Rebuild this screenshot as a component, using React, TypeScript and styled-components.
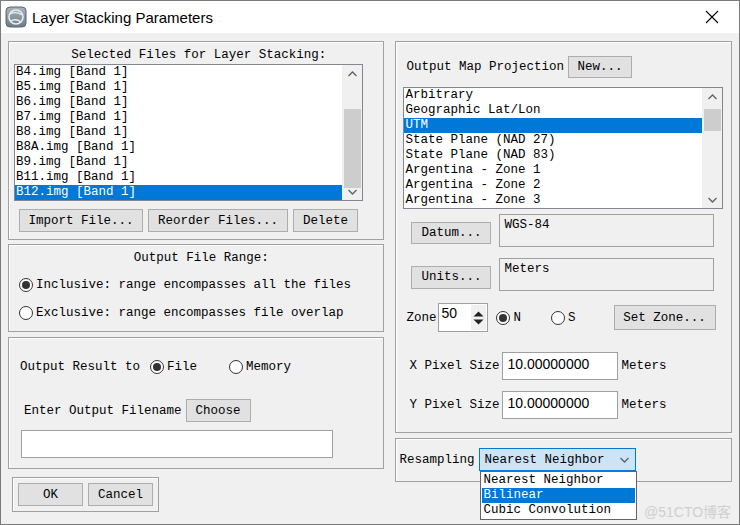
import styled, { createGlobalStyle } from "styled-components";

const Global = createGlobalStyle`
  html, body {
    margin: 0;
    padding: 0;
    background: #f0f0f0;
  }
`;

const MONO = `"Liberation Mono", "DejaVu Sans Mono", monospace`;

const Window = styled.div`
  position: relative;
  width: 740px;
  height: 525px;
  box-sizing: border-box;
  border: 1px solid #7a7a7a;
  background: #f0f0f0;
  font-family: ${MONO};
  font-size: 12.5px;
  color: #000;
  overflow: hidden;
`;

const TitleBar = styled.div`
  height: 32px;
  background: #fff;
  display: flex;
  align-items: center;
  padding-left: 4px;
  font-family: "Liberation Sans", Arial, sans-serif;
  font-size: 15px;
  color: #000;
`;

const TitleText = styled.span`
  margin-left: 5px;
  flex: 1;
`;

const CloseBox = styled.div`
  width: 46px;
  height: 32px;
  display: flex;
  align-items: center;
  justify-content: center;
  margin-right: 4px;
`;

const Body = styled.div`
  display: flex;
  gap: 11px;
  padding: 8px 7px 0 7px;
`;

const Column = styled.div<{ $w: number }>`
  width: ${(p) => p.$w}px;
  display: flex;
  flex-direction: column;
`;

const Frame = styled.div<{ $h: number; $mt?: number; $pad?: string }>`
  box-sizing: border-box;
  height: ${(p) => p.$h}px;
  margin-top: ${(p) => p.$mt ?? 0}px;
  border: 1px solid #a0a0a0;
  box-shadow: inset 1px 1px 0 #fff;
  padding: ${(p) => p.$pad ?? "0"};
  display: flex;
  flex-direction: column;
  position: relative;
`;

const ButtonFrame = styled(Frame)`
  width: 147px;
  margin-left: 4px;
  flex-direction: row;
  gap: 5px;
`;

const Legend = styled.div`
  height: 15px;
  line-height: 15px;
  text-align: center;
`;

const ListBox = styled.div<{ $w: number; $h: number; $mt?: number }>`
  box-sizing: border-box;
  width: ${(p) => p.$w}px;
  height: ${(p) => p.$h}px;
  margin-top: ${(p) => p.$mt ?? 0}px;
  border: 1px solid #828790;
  background: #fff;
  display: flex;
`;

const ListItems = styled.div`
  flex: 1;
  overflow: hidden;
`;

const ListItem = styled.div<{ $sel?: boolean }>`
  height: 15px;
  line-height: 15px;
  padding-left: 1px;
  white-space: pre;
  background: ${(p) => (p.$sel ? "#0078d7" : "transparent")};
  color: ${(p) => (p.$sel ? "#fff" : "#000")};
`;

const ScrollBar = styled.div`
  width: 20px;
  background: #f0f0f0;
  display: flex;
  flex-direction: column;
  align-items: center;
`;

const ScrollArrow = styled.div`
  height: 17px;
  display: flex;
  align-items: center;
  justify-content: center;
`;

const Track = styled.div`
  flex: 1;
  width: 100%;
  position: relative;
`;

const Thumb = styled.div<{ $top: number; $h: number }>`
  position: absolute;
  left: 2px;
  right: 1px;
  top: ${(p) => p.$top}px;
  height: ${(p) => p.$h}px;
  background: #cdcdcd;
`;

const Row = styled.div<{ $mt?: number; $ml?: number; $gap?: number; $h?: number }>`
  display: flex;
  align-items: center;
  margin-top: ${(p) => p.$mt ?? 0}px;
  margin-left: ${(p) => p.$ml ?? 0}px;
  gap: ${(p) => p.$gap ?? 0}px;
  height: ${(p) => (p.$h ? `${p.$h}px` : "auto")};
`;

const Button = styled.div<{ $w: number; $h?: number; $ml?: number; $mt?: number }>`
  box-sizing: border-box;
  width: ${(p) => p.$w}px;
  height: ${(p) => p.$h ?? 23}px;
  margin-left: ${(p) => p.$ml ?? 0}px;
  margin-top: ${(p) => p.$mt ?? 0}px;
  background: #e1e1e1;
  border: 1px solid #adadad;
  display: flex;
  align-items: center;
  justify-content: center;
  white-space: pre;
`;

const RadioCircle = styled.span<{ $on?: boolean }>`
  box-sizing: border-box;
  width: 14px;
  height: 14px;
  border-radius: 50%;
  border: 1px solid #333;
  background: #fff;
  display: inline-flex;
  align-items: center;
  justify-content: center;
  flex-shrink: 0;
  &::after {
    content: "";
    width: 8px;
    height: 8px;
    border-radius: 50%;
    background: ${(p) => (p.$on ? "#333" : "transparent")};
  }
`;

const RadioLabel = styled.label<{ $ml?: number }>`
  display: flex;
  align-items: center;
  gap: 3px;
  margin-left: ${(p) => p.$ml ?? 0}px;
  white-space: pre;
`;

const Text = styled.span<{ $ml?: number }>`
  margin-left: ${(p) => p.$ml ?? 0}px;
  white-space: pre;
`;

const TextField = styled.div<{ $w: number; $h: number; $ml?: number; $sans?: boolean; $top?: boolean }>`
  box-sizing: border-box;
  width: ${(p) => p.$w}px;
  height: ${(p) => p.$h}px;
  margin-left: ${(p) => p.$ml ?? 0}px;
  background: ${(p) => (p.$top ? "#f0f0f0" : "#fff")};
  border: 1px solid #a0a0a0;
  padding: ${(p) => (p.$top ? "3px 0 0 4px" : "4px 0 0 4px")};
  font-family: ${(p) => (p.$sans ? `"Liberation Sans", Arial, sans-serif` : MONO)};
  font-size: ${(p) => (p.$sans ? "14px" : "12.5px")};
  line-height: 15px;
  display: flex;
  align-items: flex-start;
`;

const SpinBox = styled.div`
  box-sizing: border-box;
  width: 50px;
  height: 29px;
  margin-left: 2px;
  background: #fff;
  border: 1px solid #a0a0a0;
  display: flex;
  font-family: "Liberation Sans", Arial, sans-serif;
  font-size: 14px;
  padding-left: 2px;
`;

const SpinValue = styled.span`
  flex: 1;
  line-height: 18px;
`;

const SpinButtons = styled.div`
  width: 15px;
  display: flex;
  align-items: center;
  justify-content: center;
  background: #f0f0f0;
  margin: 1px;
`;

const Select = styled.div`
  box-sizing: border-box;
  width: 157px;
  height: 23px;
  margin-left: 5px;
  background: #cce4f7;
  border: 1px solid #0078d7;
  display: flex;
  align-items: center;
  padding: 0 6px 0 4px;
  justify-content: space-between;
`;

const DropList = styled.div`
  position: absolute;
  left: 84px;
  top: 32px;
  width: 157px;
  box-sizing: border-box;
  background: #fff;
  border: 1px solid #646464;
  padding: 1px;
  z-index: 2;
`;

const Watermark = styled.div`
  position: absolute;
  left: 643px;
  top: 500px;
  font-family: "Liberation Sans", "Noto Sans CJK SC", sans-serif;
  font-size: 14px;
  color: #cfcfcf;
`;

const Chevron = ({ up }: { up?: boolean }) => (
  <svg width="9" height="6" viewBox="0 0 9 6">
    <path
      d={up ? "M0.5 5 L4.5 1 L8.5 5" : "M0.5 1 L4.5 5 L8.5 1"}
      fill="none"
      stroke="#606060"
      strokeWidth="1.3"
    />
  </svg>
);

const AppIcon = () => (
  <svg width="22" height="22" viewBox="0 0 22 22">
    <defs>
      <linearGradient id="ig" x1="0" y1="0" x2="0" y2="1">
        <stop offset="0" stopColor="#a8b4bc" />
        <stop offset="1" stopColor="#6e7c86" />
      </linearGradient>
    </defs>
    <rect x="1" y="1" width="20" height="20" rx="4" fill="url(#ig)" stroke="#5b6770" />
    <circle cx="11" cy="11" r="7" fill="none" stroke="#e8eef2" strokeWidth="1.6" />
    <path d="M5 8 Q11 5 17 9" fill="none" stroke="#e8eef2" strokeWidth="1.3" />
    <path d="M6 15 Q11 12 16 16" fill="none" stroke="#e8eef2" strokeWidth="1.3" />
  </svg>
);

const CloseIcon = () => (
  <svg width="14" height="14" viewBox="0 0 14 14">
    <path d="M1 1 L13 13 M13 1 L1 13" stroke="#000" strokeWidth="1.1" />
  </svg>
);

const SpinIcon = () => (
  <svg width="11" height="16" viewBox="0 0 11 16">
    <path d="M0.5 6.5 L5.5 1.5 L10.5 6.5 Z" fill="#222" />
    <path d="M0.5 9.5 L5.5 14.5 L10.5 9.5 Z" fill="#222" />
  </svg>
);

const Scroll = ({ thumbTop, thumbH }: { thumbTop: number; thumbH: number }) => (
  <ScrollBar>
    <ScrollArrow>
      <Chevron up />
    </ScrollArrow>
    <Track>
      <Thumb $top={thumbTop} $h={thumbH} />
    </Track>
    <ScrollArrow>
      <Chevron />
    </ScrollArrow>
  </ScrollBar>
);

const files = [
  "B4.img [Band 1]",
  "B5.img [Band 1]",
  "B6.img [Band 1]",
  "B7.img [Band 1]",
  "B8.img [Band 1]",
  "B8A.img [Band 1]",
  "B9.img [Band 1]",
  "B11.img [Band 1]",
  "B12.img [Band 1]",
];

const projections = [
  "Arbitrary",
  "Geographic Lat/Lon",
  "UTM",
  "State Plane (NAD 27)",
  "State Plane (NAD 83)",
  "Argentina - Zone 1",
  "Argentina - Zone 2",
  "Argentina - Zone 3",
];

const resampling = ["Nearest Neighbor", "Bilinear", "Cubic Convolution"];

export default function App() {
  return (
    <>
      <Global />
      <Window>
        <TitleBar>
          <AppIcon />
          <TitleText>Layer Stacking Parameters</TitleText>
          <CloseBox>
            <CloseIcon />
          </CloseBox>
        </TitleBar>
        <Body>
          <Column $w={377}>
            <Frame $h={199} $pad="6px 0 0 5px">
              <Legend>Selected Files for Layer Stacking:</Legend>
              <ListBox $w={349} $h={137} $mt={1}>
                <ListItems>
                  {files.map((f, i) => (
                    <ListItem key={f} $sel={i === files.length - 1}>
                      {f}
                    </ListItem>
                  ))}
                </ListItems>
                <Scroll thumbTop={27} thumbH={79} />
              </ListBox>
              <Row $mt={8} $ml={5} $gap={5}>
                <Button $w={124}>Import File...</Button>
                <Button $w={140}>Reorder Files...</Button>
                <Button $w={65}>Delete</Button>
              </Row>
            </Frame>

            <Frame $h={88} $mt={4} $pad="6px 0 0 10px">
              <Legend>Output File Range:</Legend>
              <Row $h={28} $mt={5}>
                <RadioLabel>
                  <RadioCircle $on />
                  Inclusive: range encompasses all the files
                </RadioLabel>
              </Row>
              <Row $h={28}>
                <RadioLabel>
                  <RadioCircle />
                  Exclusive: range encompasses file overlap
                </RadioLabel>
              </Row>
            </Frame>

            <Frame $h={132} $mt={5} $pad="20px 0 0 11px">
              <Row $h={18}>
                <Text>Output Result to</Text>
                <RadioLabel $ml={10}>
                  <RadioCircle $on />
                  File
                </RadioLabel>
                <RadioLabel $ml={32}>
                  <RadioCircle />
                  Memory
                </RadioLabel>
              </Row>
              <Row $mt={23} $ml={4}>
                <Text>Enter Output Filename</Text>
                <Button $w={65} $ml={4}>
                  Choose
                </Button>
              </Row>
              <Row $mt={8} $ml={1}>
                <TextField $w={312} $h={28} />
              </Row>
            </Frame>

            <ButtonFrame $h={35} $mt={8} $pad="5px">
              <Button $w={65}>OK</Button>
              <Button $w={65}>Cancel</Button>
            </ButtonFrame>
          </Column>

          <Column $w={337}>
            <Frame $h={392} $pad="14px 0 0 7px">
              <Row>
                <Text $ml={3}>Output Map Projection</Text>
                <Button $w={64} $h={22} $ml={4}>
                  New...
                </Button>
              </Row>
              <ListBox $w={320} $h={122} $mt={9}>
                <ListItems>
                  {projections.map((p, i) => (
                    <ListItem key={p} $sel={i === 2}>
                      {p}
                    </ListItem>
                  ))}
                </ListItems>
                <Scroll thumbTop={4} thumbH={22} />
              </ListBox>
              <Row $mt={5} $ml={8}>
                <Button $w={80} $h={22} $mt={5}>
                  Datum...
                </Button>
                <TextField $w={215} $h={33} $ml={8} $top>
                  WGS-84
                </TextField>
              </Row>
              <Row $mt={11} $ml={8}>
                <Button $w={80} $h={23} $mt={5}>
                  Units...
                </Button>
                <TextField $w={215} $h={33} $ml={8} $top>
                  Meters
                </TextField>
              </Row>
              <Row $mt={12} $ml={3}>
                <Text>Zone</Text>
                <SpinBox>
                  <SpinValue>50</SpinValue>
                  <SpinButtons>
                    <SpinIcon />
                  </SpinButtons>
                </SpinBox>
                <RadioLabel $ml={8}>
                  <RadioCircle $on />N
                </RadioLabel>
                <RadioLabel $ml={30}>
                  <RadioCircle />S
                </RadioLabel>
                <Button $w={102} $h={25} $ml={38}>
                  Set Zone...
                </Button>
              </Row>
              <Row $mt={20} $ml={6}>
                <Text>X Pixel Size</Text>
                <TextField $w={116} $h={28} $ml={3} $sans>
                  10.00000000
                </TextField>
                <Text $ml={3}>Meters</Text>
              </Row>
              <Row $mt={11} $ml={6}>
                <Text>Y Pixel Size</Text>
                <TextField $w={116} $h={28} $ml={3} $sans>
                  10.00000000
                </TextField>
                <Text $ml={3}>Meters</Text>
              </Row>
            </Frame>

            <Frame $h={44} $mt={5} $pad="9px 0 0 3px">
              <Row>
                <Text>Resampling</Text>
                <Select>
                  <span>Nearest Neighbor</span>
                  <Chevron />
                </Select>
              </Row>
              <DropList>
                {resampling.map((r, i) => (
                  <ListItem key={r} $sel={i === 1}>
                    {r}
                  </ListItem>
                ))}
              </DropList>
            </Frame>
          </Column>
        </Body>
        <Watermark>@51CTO博客</Watermark>
      </Window>
    </>
  );
}
